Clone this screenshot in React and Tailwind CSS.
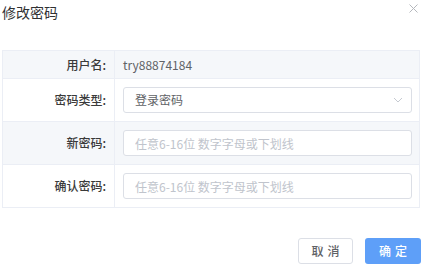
import React from 'react';

const font = { fontFamily: '"Noto Sans CJK SC", "Noto Sans", sans-serif' };

function Row({ label, shaded, height, children }) {
  return (
    <div className={`flex border-t border-[#ebeef5] ${shaded ? 'bg-[#f5f7fa]' : 'bg-white'} ${height}`}>
      <div className="w-[112px] shrink-0 border-r border-[#ebeef5] flex items-center justify-end pr-[8px] text-[12px] font-medium text-[#3a3a3a]">
        {label}
      </div>
      <div className="flex-1 flex items-center pl-[8px] pr-[7px]">{children}</div>
    </div>
  );
}

function Input({ placeholder }) {
  return (
    <input
      placeholder={placeholder}
      className="w-full h-[26px] border border-[#dcdfe6] rounded-[3px] bg-white px-[11px] text-[12px] text-[#606266] placeholder:text-[#c0c4cc] outline-none"
      style={font}
    />
  );
}

export default function App() {
  return (
    <div className="w-[426px] h-[268px] bg-white relative overflow-hidden" style={font}>
      <div className="h-[50px] pl-[2px] pt-[1px] text-[14px] leading-[22px] text-[#303133]">修改密码</div>
      <button className="absolute right-[8px] top-[4px] text-[#b5b8bd]">
        <svg width="9" height="9" viewBox="0 0 9 9" fill="none" stroke="currentColor" strokeWidth="1">
          <path d="M0.5 0.5 L8.5 8.5 M8.5 0.5 L0.5 8.5" />
        </svg>
      </button>

      <div className="mx-[2px] w-[418px] border-b border-x border-[#ebeef5]">
        <Row label="用户名:" shaded height="h-[28px]">
          <span className="text-[12px] text-[#606266]">try88874184</span>
        </Row>
        <Row label="密码类型:" height="h-[43px]">
          <div className="w-full h-[26px] border border-[#dcdfe6] rounded-[3px] flex items-center justify-between pl-[11px] pr-[8px] text-[12px] text-[#606266]">
            <span>登录密码</span>
            <svg width="10" height="6" viewBox="0 0 10 6" fill="none" stroke="#c0c4cc" strokeWidth="0.9">
              <path d="M1 1 L5 5 L9 1" />
            </svg>
          </div>
        </Row>
        <Row label="新密码:" shaded height="h-[43px]">
          <Input placeholder="任意6-16位 数字字母或下划线" />
        </Row>
        <Row label="确认密码:" height="h-[43px]">
          <Input placeholder="任意6-16位 数字字母或下划线" />
        </Row>
      </div>

      <div className="flex justify-end gap-[12px] pr-[5px] mt-[30px]">
        <button className="w-[55px] h-[26px] border border-[#dcdfe6] rounded-[3px] bg-white text-[12px] font-medium text-[#606266] tracking-[4px] pl-[4px]">取消</button>
        <button className="w-[56px] h-[26px] rounded-[3px] bg-[#5e9ff8] text-[12px] font-medium text-white tracking-[4px] pl-[4px]">确定</button>
      </div>
    </div>
  );
}
